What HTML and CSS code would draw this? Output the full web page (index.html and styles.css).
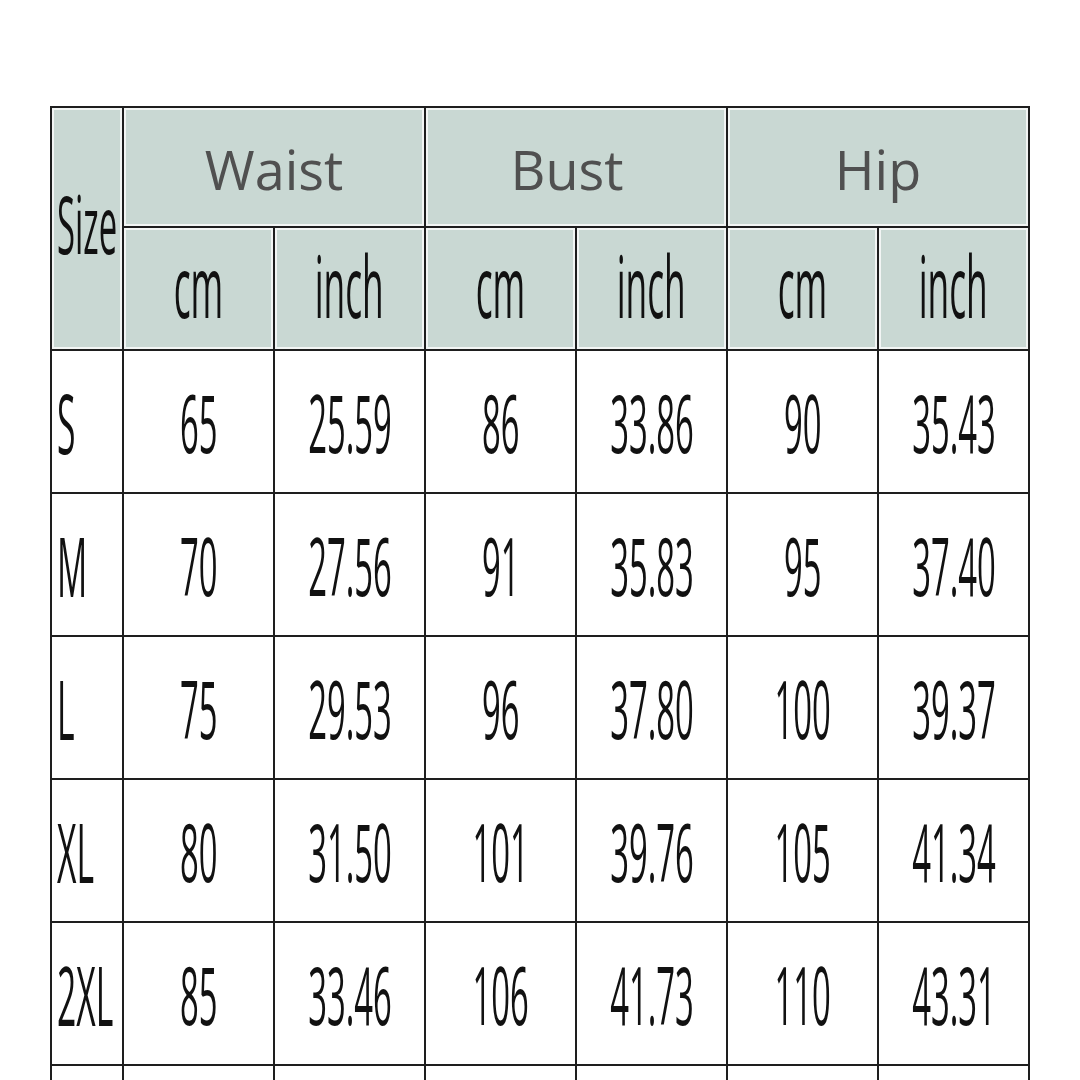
FILE: index.html
```html
<!DOCTYPE html>
<html>
<head>
<meta charset="utf-8">
<link rel="stylesheet" href="styles.css">
</head>
<body>
<table class="chart">
  <colgroup>
    <col class="c-size"><col class="c-val"><col class="c-val"><col class="c-val"><col class="c-val"><col class="c-val"><col class="c-val">
  </colgroup>
  <thead>
    <tr class="h1">
      <th rowspan="2" class="size-h"><div class="cell cell-l"><span class="nar nar-l">Size</span></div></th>
      <th colspan="2" class="grp">Waist</th>
      <th colspan="2" class="grp grp-bust">Bust</th>
      <th colspan="2" class="grp">Hip</th>
    </tr>
    <tr class="h2">
      <th><div class="cell"><span class="nar unit">cm</span></div></th><th><div class="cell"><span class="nar unit">inch</span></div></th>
      <th><div class="cell"><span class="nar unit">cm</span></div></th><th><div class="cell"><span class="nar unit">inch</span></div></th>
      <th><div class="cell"><span class="nar unit">cm</span></div></th><th><div class="cell"><span class="nar unit">inch</span></div></th>
    </tr>
  </thead>
  <tbody>
    <tr><td class="sz"><div class="cell cell-l"><span class="nar nar-l">S</span></div></td><td><div class="cell"><span class="nar">65</span></div></td><td><div class="cell"><span class="nar">25.59</span></div></td><td><div class="cell"><span class="nar">86</span></div></td><td><div class="cell"><span class="nar">33.86</span></div></td><td><div class="cell"><span class="nar">90</span></div></td><td><div class="cell"><span class="nar">35.43</span></div></td></tr>
    <tr><td class="sz"><div class="cell cell-l"><span class="nar nar-l">M</span></div></td><td><div class="cell"><span class="nar">70</span></div></td><td><div class="cell"><span class="nar">27.56</span></div></td><td><div class="cell"><span class="nar">91</span></div></td><td><div class="cell"><span class="nar">35.83</span></div></td><td><div class="cell"><span class="nar">95</span></div></td><td><div class="cell"><span class="nar">37.40</span></div></td></tr>
    <tr><td class="sz"><div class="cell cell-l"><span class="nar nar-l">L</span></div></td><td><div class="cell"><span class="nar">75</span></div></td><td><div class="cell"><span class="nar">29.53</span></div></td><td><div class="cell"><span class="nar">96</span></div></td><td><div class="cell"><span class="nar">37.80</span></div></td><td><div class="cell"><span class="nar">100</span></div></td><td><div class="cell"><span class="nar">39.37</span></div></td></tr>
    <tr><td class="sz"><div class="cell cell-l"><span class="nar nar-l">XL</span></div></td><td><div class="cell"><span class="nar">80</span></div></td><td><div class="cell"><span class="nar">31.50</span></div></td><td><div class="cell"><span class="nar">101</span></div></td><td><div class="cell"><span class="nar">39.76</span></div></td><td><div class="cell"><span class="nar">105</span></div></td><td><div class="cell"><span class="nar">41.34</span></div></td></tr>
    <tr><td class="sz"><div class="cell cell-l"><span class="nar nar-l">2XL</span></div></td><td><div class="cell"><span class="nar">85</span></div></td><td><div class="cell"><span class="nar">33.46</span></div></td><td><div class="cell"><span class="nar">106</span></div></td><td><div class="cell"><span class="nar">41.73</span></div></td><td><div class="cell"><span class="nar">110</span></div></td><td><div class="cell"><span class="nar">43.31</span></div></td></tr>
    <tr><td class="sz"></td><td></td><td></td><td></td><td></td><td></td><td></td></tr>
  </tbody>
</table>
</body>
</html>
```
FILE: styles.css
```css
html, body {
  margin: 0;
  padding: 0;
  background: #fff;
  overflow: hidden;
  height: 1080px;
}
.chart {
  margin: 106px 0 0 50px;
  border-collapse: collapse;
  table-layout: fixed;
  width: 979px;
  font-family: "Open Sans", "Noto Sans", sans-serif;
  color: #111;
}
.c-size { width: 72px; }
.c-val { width: 151px; }
.chart th, .chart td {
  border: 2px solid #1e1e1e;
  padding: 0;
  text-align: center;
  vertical-align: middle;
  overflow: hidden;
  white-space: nowrap;
}
.chart th {
  background: #c9d8d3;
  box-shadow: inset 0 0 0 2px rgba(255,255,255,0.75);
  font-weight: normal;
}
.h1 { height: 120px; }
.h2 { height: 123px; }
.chart tbody tr { height: 143px; }
.cell {
  display: flex;
  justify-content: center;
  align-items: center;
}
.cell-l {
  justify-content: flex-start;
  padding-left: 5px;
}
.chart .grp {
  font-size: 54px;
  color: #505050;
  line-height: 1;
  padding-top: 4px;
}
.chart .grp-bust { padding-right: 18px; }
.nar {
  display: inline-block;
  flex: none;
  transform: scaleX(0.41);
  transform-origin: center;
  font-size: 80px;
  line-height: 1;
}
.unit {
  font-size: 86px;
  position: relative;
  top: -4px;
}
.nar-l {
  transform-origin: left center;
  font-size: 82px;
}
.size-h .nar-l { font-size: 80px; position: relative; top: -6px; }
```
